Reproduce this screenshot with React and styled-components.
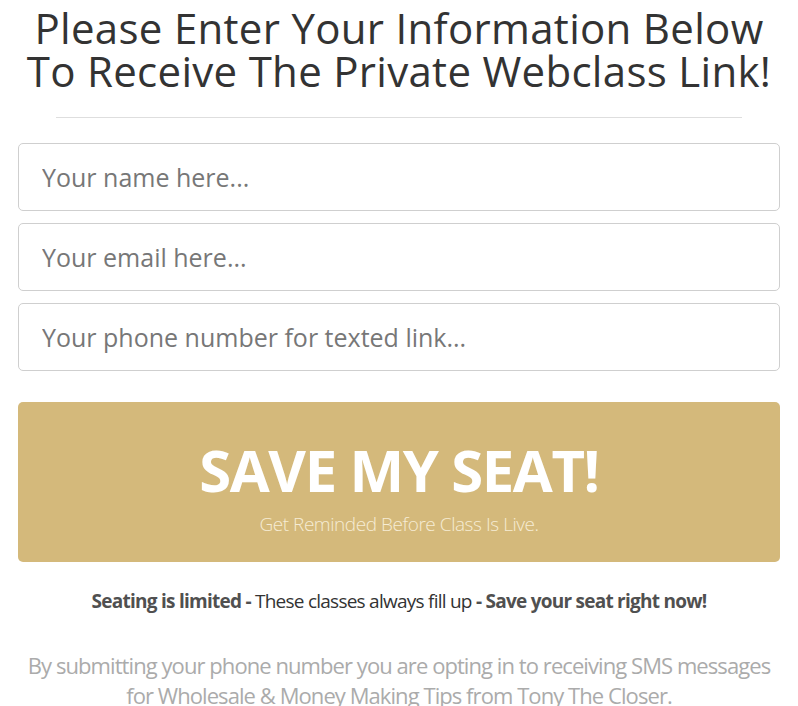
import React from 'react'
import styled, { createGlobalStyle } from 'styled-components'

const Global = createGlobalStyle`
    body {
        margin: 0;
        background: #fff;
        font-family: "Open Sans", "Liberation Sans", sans-serif;
    }
`

const Page = styled.div`
    padding: 0 18px;
    display: flex;
    flex-direction: column;
`

const Title = styled.h1`
    margin: 6px 0 0;
    font-size: 42px;
    font-weight: 400;
    line-height: 43px;
    color: #333;
    text-align: center;
    letter-spacing: 0.3px;
`

const Divider = styled.hr`
    border: none;
    border-top: 1px solid #dedede;
    margin: 25px 38px 25px;
`

const Fields = styled.div`
    display: flex;
    flex-direction: column;
    gap: 12px;
`

const Input = styled.input`
    height: 68px;
    box-sizing: border-box;
    border: 1px solid #cfcfcf;
    border-radius: 5px;
    padding: 0 23px;
    font-family: inherit;
    font-size: 25px;
    color: #333;
    outline: none;

    &::placeholder {
        color: #777;
    }
`

const Button = styled.button`
    margin-top: 31px;
    height: 160px;
    border: none;
    border-radius: 5px;
    background-color: #d4b97b;
    color: #fff;
    display: flex;
    flex-direction: column;
    align-items: center;
    justify-content: center;
    font-family: inherit;
    cursor: pointer;
    padding: 12px 0 0;
`

const ButtonTitle = styled.span`
    font-size: 58px;
    font-weight: 700;
    line-height: 60px;
    letter-spacing: -1.4px;
`

const ButtonSub = styled.span`
    margin-top: 11px;
    font-size: 19px;
    line-height: 26px;
    font-weight: 300;
    color: #f6ecd4;
    letter-spacing: -0.45px;
`

const Note = styled.p`
    margin: 26px 0 0;
    text-align: center;
    font-size: 19px;
    line-height: 26px;
    color: #333;
    letter-spacing: -0.75px;

    b {
        color: #505050;
        font-weight: 700;
    }
`

const Disclaimer = styled.p`
    margin: 36px 0 0;
    text-align: center;
    font-size: 22px;
    line-height: 30px;
    color: #ababab;
    font-weight: 400;
    letter-spacing: -0.93px;
`

function App() {
    return (
        <Page>
            <Global />
            <Title>
                Please Enter Your Information Below
                <br />
                To Receive The Private Webclass Link!
            </Title>
            <Divider />
            <Fields>
                <Input type="text" placeholder="Your name here..." />
                <Input type="email" placeholder="Your email here..." />
                <Input type="tel" placeholder="Your phone number for texted link..." />
            </Fields>
            <Button>
                <ButtonTitle>SAVE MY SEAT!</ButtonTitle>
                <ButtonSub>Get Reminded Before Class Is Live.</ButtonSub>
            </Button>
            <Note>
                <b>Seating is limited - </b>These classes always fill up<b> - Save your seat right now!</b>
            </Note>
            <Disclaimer>
                By submitting your phone number you are opting in to receiving SMS messages
                <br />
                for Wholesale &amp; Money Making Tips from Tony The Closer.
            </Disclaimer>
        </Page>
    )
}

export default App
